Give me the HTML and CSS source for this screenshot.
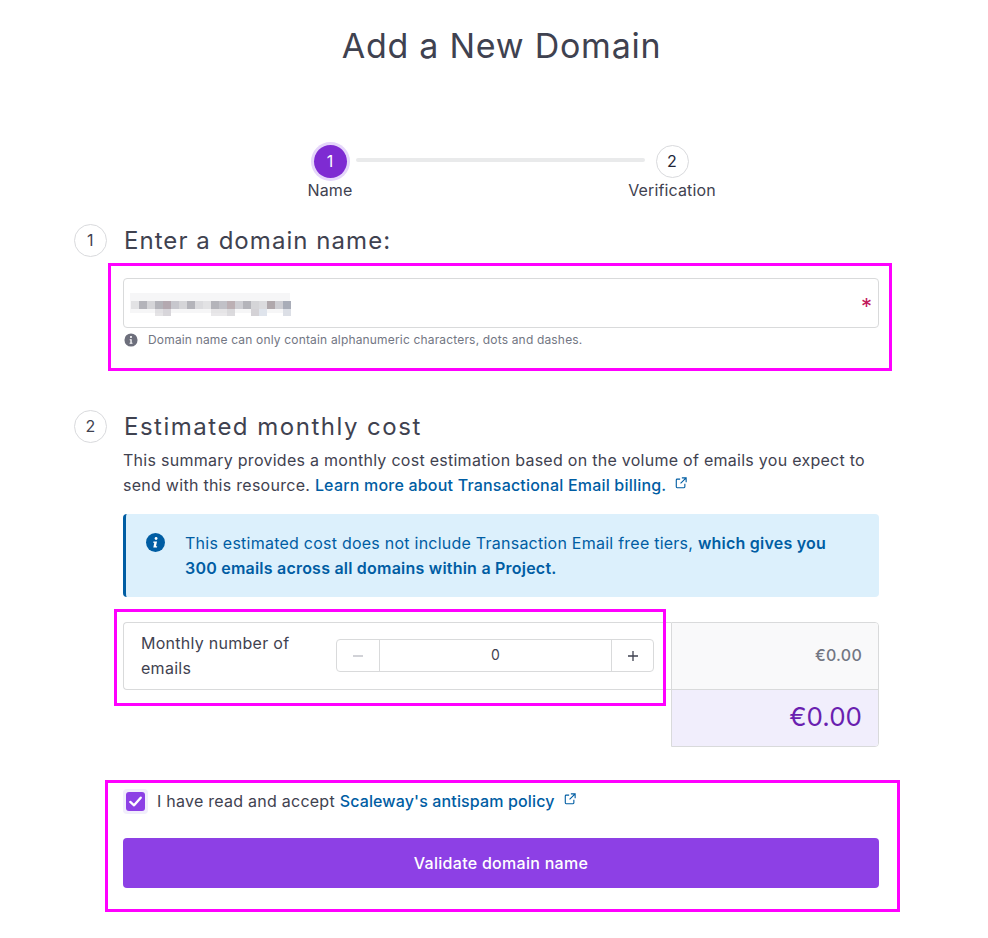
FILE: index.html
```html
<!DOCTYPE html>
<html lang="en">
<head>
<meta charset="utf-8">
<title>Add a New Domain</title>
<link rel="stylesheet" href="styles.css">
</head>
<body>
<main class="page">
  <h1 class="title">Add a New Domain</h1>

  <ol class="stepper">
    <li class="step step-active"><span class="step-dot">1</span><span class="step-label">Name</span></li>
    <li class="step-line"></li>
    <li class="step"><span class="step-dot">2</span><span class="step-label">Verification</span></li>
  </ol>

  <section class="section section-name">
    <span class="num">1</span>
    <div class="body">
      <h2 class="heading">Enter a domain name:</h2>
      <div class="field">
        <svg class="blur" width="170" height="26" viewBox="0 0 170 26" aria-hidden="true">
          <g class="blur-far"><rect x="6" y="3" width="160" height="20"/></g>
          <g fill="#b4b4ba"><rect x="7" y="11" width="8" height="8" opacity=".3"/><rect x="15" y="11" width="8" height="8"/><rect x="23" y="11" width="8" height="8" opacity=".5"/><rect x="31" y="11" width="8" height="8"/><rect x="39" y="11" width="8" height="8" fill="#b4a9b0"/><rect x="47" y="11" width="8" height="8" opacity=".7"/><rect x="55" y="11" width="8" height="8" opacity=".5"/><rect x="63" y="11" width="8" height="8"/><rect x="71" y="11" width="8" height="8" opacity=".4"/><rect x="79" y="11" width="8" height="8" opacity=".3"/><rect x="87" y="11" width="8" height="8"/><rect x="95" y="11" width="8" height="8" opacity=".8"/><rect x="103" y="11" width="8" height="8" fill="#bcb0b4"/><rect x="111" y="11" width="8" height="8" opacity=".6"/><rect x="119" y="11" width="8" height="8"/><rect x="127" y="11" width="8" height="8" opacity=".5"/><rect x="135" y="11" width="8" height="8" opacity=".4"/><rect x="143" y="11" width="8" height="8" fill="#b0a8ac"/><rect x="151" y="11" width="8" height="8" opacity=".6"/><rect x="159" y="11" width="8" height="8" fill="#a9adb8"/></g>
          <g fill="#d4d2d6"><rect x="39" y="19" width="8" height="8" opacity=".9"/><rect x="31" y="19" width="8" height="8" opacity=".6"/><rect x="127" y="19" width="8" height="8"/><rect x="135" y="19" width="8" height="8" fill="#dfe4ec"/><rect x="159" y="19" width="8" height="8" fill="#dcdfe6"/><rect x="103" y="19" width="8" height="8" opacity=".6"/><rect x="87" y="19" width="24" height="8" opacity=".5"/></g>
        </svg>
        <span class="required">*</span>
      </div>
      <p class="hint">
        <svg class="hint-icon" viewBox="0 0 16 16" aria-hidden="true"><circle cx="8" cy="8" r="7.5" fill="#6d6f7c"/><circle cx="8" cy="4.6" r="1.2" fill="#fff"/><path d="M6.5 7h2.3v4.2h.9v1.2H6.4v-1.2h.9V8.200H6.500z" fill="#fff"/></svg>
        Domain name can only contain alphanumeric characters, dots and dashes.
      </p>
    </div>
  </section>

  <section class="section section-cost">
    <span class="num">2</span>
    <div class="body">
      <h2 class="heading heading-wide">Estimated monthly cost</h2>
      <p class="text">This summary provides a monthly cost estimation based on the volume of emails you expect to send with this resource. <a class="link" href="#">Learn more about Transactional Email billing.<svg class="ext" viewBox="0 0 14 14" aria-hidden="true"><path d="M6 2.500H2.500a1 1 0 0 0-1 1v8a1 1 0 0 0 1 1h8a1 1 0 0 0 1-1V8M8 1h5v5M13 1 6.500 7.500"/></svg></a></p>
      <div class="alert">
        <svg class="alert-icon" viewBox="0 0 20 20" aria-hidden="true"><circle cx="10" cy="10" r="10" fill="#005da3"/><circle cx="10.600" cy="5.800" r="1.500" fill="#fff"/><path d="M7.800 9h3.800l-1.100 5h1.300l-.3 1.300H7.700l1-5H7.500z" fill="#fff"/></svg>
        <p class="alert-text">This estimated cost does not include Transaction Email free tiers, <strong>which gives you 300 emails across all domains within a Project.</strong></p>
      </div>
      <div class="estimate">
        <div class="estimate-row">
          <span class="estimate-label">Monthly number of emails</span>
          <div class="counter">
            <span class="counter-btn counter-off">
              <svg viewBox="0 0 12 12" aria-hidden="true"><path d="M1 6h10"/></svg>
            </span>
            <span class="counter-value">0</span>
            <span class="counter-btn counter-plus">
              <svg viewBox="0 0 12 12" aria-hidden="true"><path d="M1 6h10M6 1v10"/></svg>
            </span>
          </div>
        </div>
        <div class="price">
          <div class="price-item">€0.00</div>
          <div class="price-total">€0.00</div>
        </div>
      </div>
      <label class="accept">
        <span class="check"><svg viewBox="0 0 20 20" aria-hidden="true"><path d="M4.500 10.500 8.500 14l7-8"/></svg></span>
        <span>I have read and accept <a class="link link-tight" href="#">Scaleway's antispam policy<svg class="ext" viewBox="0 0 14 14" aria-hidden="true"><path d="M6 2.500H2.500a1 1 0 0 0-1 1v8a1 1 0 0 0 1 1h8a1 1 0 0 0 1-1V8M8 1h5v5M13 1 6.500 7.500"/></svg></a></span>
      </label>
      <button class="submit" type="button">Validate domain name</button>
    </div>
  </section>

  <div class="mark mark-a"></div>
  <div class="mark mark-b"></div>
  <div class="mark mark-c"></div>
</main>
</body>
</html>
```

FILE: styles.css
```css
* { box-sizing: border-box; }
html, body { margin: 0; padding: 0; background: #fff; }
body { font-family: Inter, "Liberation Sans", sans-serif; color: #3f4250; font-size: 16px; line-height: 25px; letter-spacing: .27px; }
.page { position: relative; width: 988px; height: 938px; padding: 26px 109px 0 74px; overflow: hidden; }

.title { margin: 0; font-family: Inter, sans-serif; font-weight: 400; font-size: 34px; line-height: 40px; letter-spacing: .75px; text-align: center; color: #3f4250; width: 855px; }

.stepper { list-style: none; margin: 79px 0 0 223px; padding: 0; display: flex; align-items: flex-start; }
.step { width: 88px; display: flex; flex-direction: column; align-items: center; flex: none; letter-spacing: .15px; }
.step:first-child { width: 66px; }
.step-dot { width: 33px; height: 33px; border-radius: 50%; border: 1px solid #d9dadd; display: flex; align-items: center; justify-content: center; color: #222638; }
.step-active .step-dot { background: #7e2bd2; border: 0; color: #fff; box-shadow: 0 0 0 3px #e5d6fa; }
.step-label { line-height: 25px; white-space: nowrap; }
.step-line { width: 289px; height: 4px; background: #e9eaeb; border-radius: 2px; margin: 13px 0 0 -7px; flex: none; }
.step-line + .step { margin-left: -17px; }

.section { display: flex; gap: 16px; }
.section-name { margin-top: 21px; }
.section-cost { margin-top: 61px; }
.num { width: 33px; height: 33px; flex: none; border-radius: 50%; border: 1px solid #d9dadd; display: flex; align-items: center; justify-content: center; color: #3f4250; }
.body { width: 756px; flex: none; }
.heading { margin: 0; font-family: Inter, sans-serif; font-weight: 400; font-size: 24px; line-height: 33px; letter-spacing: 1.05px; color: #3f4250; padding-left: 1px; }
.heading-wide { letter-spacing: 1.5px; }

.field { margin-top: 21px; height: 50px; border: 1px solid #d9dadb; border-radius: 4px; display: flex; align-items: center; justify-content: space-between; padding-right: 6px; }
.blur { flex: none; }
.blur-far { fill: #f6f6f7; }
.required { color: #c2185b; font-size: 22px; line-height: 22px; padding-top: 6px; letter-spacing: 0; }
.hint { margin: 3px 0 0 0; font-size: 12px; line-height: 18px; letter-spacing: .17px; color: #727683; display: flex; align-items: center; gap: 10px; padding-left: 1px; }
.hint-icon { width: 14px; height: 14px; flex: none; }

.text { margin: 5px 0 0 0; }
.link { color: #005da3; font-weight: 500; text-decoration: none; letter-spacing: .2px; }
.link-tight { letter-spacing: .14px; }
.ext { width: 12px; height: 12px; margin-left: 9px; fill: none; stroke: #005da3; stroke-width: 1.300; vertical-align: 2px; }

.alert { margin-top: 16px; height: 83px; background: #dcf0fc; border-left: 3px solid #005da3; border-radius: 4px; padding: 17px 32px 0 20px; display: flex; gap: 20px; color: #005da3; letter-spacing: .24px; }
.alert-icon { width: 19px; height: 19px; flex: none; margin-top: 2px; }
.alert-text { margin: 0; }
.alert-text strong { font-weight: 600; letter-spacing: .22px; }

.estimate { margin-top: 25px; display: flex; align-items: flex-start; }
.estimate-row { width: 548px; height: 68px; border: 1px solid #d9dadb; border-right: 0; border-radius: 4px 0 0 4px; display: flex; align-items: center; justify-content: space-between; padding: 0 17px 1px 17px; }
.estimate-label { width: 175px; }
.counter { width: 318px; height: 33px; border: 1px solid #d9dadb; border-radius: 4px; display: flex; font-size: 14px; }
.counter-btn { width: 42px; flex: none; display: flex; align-items: center; justify-content: center; }
.counter-plus { width: 41px; }
.counter-btn svg { width: 12px; height: 12px; fill: none; stroke: #3f4250; stroke-width: 1.300; }
.counter-off svg { stroke: #b8bac1; }
.counter-value { flex: 1; text-align: center; border-left: 1px solid #d9dadb; border-right: 1px solid #d9dadb; line-height: 30px; }
.price { width: 208px; border: 1px solid #d9dadb; border-radius: 0 4px 4px 0; overflow: hidden; text-align: right; }
.price-item { height: 66px; background: #f9f9fa; color: #727683; font-weight: 500; padding: 20px 16px 0 0; }
.price-total { height: 57px; background: #f1eefc; border-top: 1px solid #d9dadb; color: #6a1fb0; font-size: 26px; line-height: 54px; padding-right: 16px; letter-spacing: 0; }

.accept { display: flex; align-items: center; margin-top: 42px; gap: 9px; height: 25px; letter-spacing: .25px; }
.check { width: 25px; height: 25px; flex: none; background: #f1eefc; border-radius: 4px; padding: 3px; }
.check svg { display: block; width: 19px; height: 19px; background: #8d40e5; border-radius: 3px; fill: none; stroke: #fff; stroke-width: 2.500; stroke-linecap: round; stroke-linejoin: round; }

.submit { margin-top: 24px; width: 100%; height: 50px; border: 0; border-radius: 4px; background: #8d40e5; color: #fff; font: 500 16px/24px Inter, sans-serif; letter-spacing: .28px; }

.mark { position: absolute; border: 3px solid #ff00ff; }
.mark-a { left: 108px; top: 263px; width: 784px; height: 108px; }
.mark-b { left: 114px; top: 609px; width: 552px; height: 97px; }
.mark-c { left: 105px; top: 780px; width: 795px; height: 132px; }
```
